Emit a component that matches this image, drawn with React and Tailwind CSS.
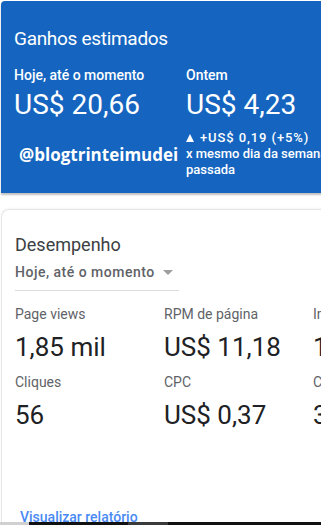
import React from "react";

const font = { fontFamily: "Roboto, 'Liberation Sans', sans-serif" };

const Metric = ({ label, value }) => (
  <div className="w-[149px] shrink-0 whitespace-nowrap">
    <p className="text-[14px] leading-[20px] text-[#5f6368]">{label}</p>
    <p className="mt-[7px] text-[26px] leading-[32px] text-[#202124]">{value}</p>
  </div>
);

const App = () => {
  return (
    <div className="relative w-[321px] h-[525px] overflow-hidden bg-white" style={font}>
      <div className="ml-[1px] mt-[1px] w-[360px] h-[192px] rounded-tl-[4px] bg-[#1565c0] text-white px-[13px] pt-[26px] shadow-[0_2px_2px_rgba(0,0,0,0.25)]">
        <h2 className="text-[19px] leading-[24px] tracking-[-0.3px]">Ganhos estimados</h2>

        <div className="flex mt-[14px]">
          <div className="w-[172px] shrink-0">
            <p className="text-[14px] leading-[20px] font-medium">Hoje, até o momento</p>
            <p className="mt-[4px] text-[28px] leading-[32px]">US$ 20,66</p>
            <p
              className="mt-[22px] ml-[5px] text-[17px] leading-[24px] font-bold"
              style={{ fontFamily: "'Open Sans', sans-serif" }}
            >
              @blogtrinteimudei
            </p>
          </div>

          <div className="whitespace-nowrap">
            <p className="text-[14px] leading-[20px] font-medium">Ontem</p>
            <p className="mt-[4px] text-[28px] leading-[32px]">US$ 4,23</p>
            <div className="mt-[9px] text-[13px] leading-[16px] font-medium">
              <p className="flex items-center">
                <span className="w-0 h-0 border-l-[4px] border-r-[4px] border-b-[8px] border-l-transparent border-r-transparent border-b-white mr-[6px]" />
                <span className="tracking-[0.9px]">+US$ 0,19 (+5%)</span>
              </p>
              <p>x mesmo dia da semana</p>
              <p>passada</p>
            </div>
          </div>
        </div>
      </div>

      <div className="ml-[1px] mt-[16px] w-[360px] h-[330px] rounded-tl-[8px] border-t border-l border-[#e6e6e6] shadow-[0_-1px_2px_rgba(0,0,0,0.04)] px-[13px] pt-[23px]">
        <h3 className="text-[18px] leading-[24px] text-[#3c4043]">Desempenho</h3>

        <div className="mt-[5px] w-[164px] pb-[8px] border-b border-[#dadce0] flex items-center gap-[8px]">
          <span className="text-[14px] leading-[20px] font-medium tracking-[0.5px] text-[#5f6368] whitespace-nowrap">
            Hoje, até o momento
          </span>
          <span className="w-0 h-0 border-l-[5px] border-r-[5px] border-t-[5px] border-l-transparent border-r-transparent border-t-[#9e9e9e]" />
        </div>

        <div className="mt-[13px] flex">
          <Metric label="Page views" value="1,85 mil" />
          <Metric label="RPM de página" value="US$ 11,18" />
          <Metric label="Impressões" value="1" />
        </div>

        <div className="mt-[9px] flex">
          <Metric label="Cliques" value="56" />
          <Metric label="CPC" value="US$ 0,37" />
          <Metric label="CTR" value="3" />
        </div>

        <a className="block mt-[76px] ml-[5px] text-[14px] leading-[20px] font-medium text-[#4a8af4]">
          Visualizar relatório
        </a>
      </div>

      <div className="absolute bottom-0 left-0 w-full h-[3px] flex">
        <div className="w-[29px] bg-[#d0d0d0]" />
        <div className="w-[99px] bg-[#111111]" />
        <div className="w-[40px] bg-[#3a3a3a]" />
        <div className="flex-1 bg-[#111111]" />
      </div>
    </div>
  );
};

export default App;
